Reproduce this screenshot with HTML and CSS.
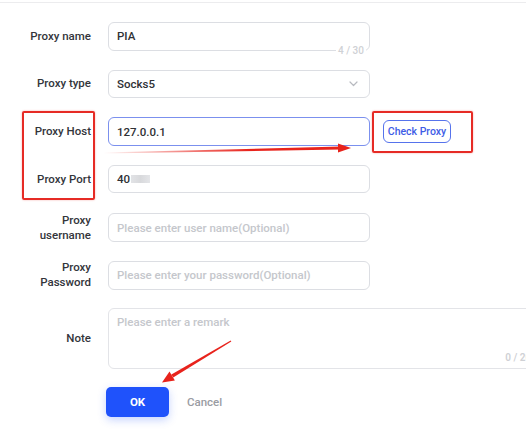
FILE: index.html
```html
<!DOCTYPE html>
<html>
<head>
<meta charset="utf-8">
<link rel="stylesheet" href="styles.css">
</head>
<body>
<div class="topline"></div>
<form class="form">
  <div class="row">
    <label class="label">Proxy name</label>
    <div class="input">
      <span class="value">PIA</span>
      <span class="count">4 / 30</span>
    </div>
  </div>
  <div class="row">
    <label class="label">Proxy type</label>
    <div class="input select">
      <span class="value">Socks5</span>
      <svg class="chev" width="9" height="6" viewBox="0 0 9 6"><path d="M1 1l3.5 3.5L8 1" fill="none" stroke="#b8bac0" stroke-width="1.2" stroke-linecap="round" stroke-linejoin="round"/></svg>
    </div>
  </div>
  <div class="row">
    <label class="label">Proxy Host</label>
    <div class="input focus"><span class="value">127.0.0.1</span></div>
    <button type="button" class="check">Check Proxy</button>
  </div>
  <div class="row">
    <label class="label">Proxy Port</label>
    <div class="input"><span class="value">40</span><span class="blur"></span></div>
  </div>
  <div class="row">
    <label class="label">Proxy<br>username</label>
    <div class="input"><span class="ph">Please enter user name(Optional)</span></div>
  </div>
  <div class="row">
    <label class="label">Proxy<br>Password</label>
    <div class="input"><span class="ph">Please enter your password(Optional)</span></div>
  </div>
  <div class="row tall">
    <label class="label">Note</label>
    <div class="textarea">
      <span class="ph">Please enter a remark</span>
      <span class="tcount">0 / 200</span>
    </div>
  </div>
  <div class="actions">
    <button type="button" class="ok">OK</button>
    <button type="button" class="cancel">Cancel</button>
  </div>
</form>

<div class="mark mark-labels"></div>
<div class="mark mark-check"></div>
<svg class="arrows" width="526" height="440" viewBox="0 0 526 440">
  <defs>
    <linearGradient id="fade1" x1="103" y1="0" x2="250" y2="0" gradientUnits="userSpaceOnUse">
      <stop offset="0" stop-color="#e8231c" stop-opacity="0"/>
      <stop offset="1" stop-color="#e8231c" stop-opacity="1"/>
    </linearGradient>
  </defs>
  <polygon points="103,152.6 341,146.6 341,149.6 103,153.4" fill="url(#fade1)"/>
  <polygon points="338,143.6 351,148.1 338,152.6" fill="#e8231c"/>
  <polygon points="231.3,341.4 230.7,340.6 171.4,374.4 173.2,377.4" fill="#e8231c"/>
  <polygon points="174.9,380.6 169.5,371.4 162,382.5" fill="#e8231c"/>
</svg>
</body>
</html>
```

FILE: styles.css
```css
* { box-sizing: border-box; }
html, body {
  margin: 0;
  padding: 0;
  background: #fff;
  overflow: hidden;
  width: 526px;
  height: 440px;
}
body {
  font-family: Roboto, "Noto Sans", sans-serif;
  color: #303133;
  position: relative;
}
.topline {
  height: 1px;
  margin-top: 2px;
  background: #ececee;
}
.form {
  display: flex;
  flex-direction: column;
  gap: 19.67px;
  padding-top: 19px;
  margin: 0;
}
.row {
  display: grid;
  grid-template-columns: 91px 262px auto;
  column-gap: 17px;
  align-items: center;
  height: 28px;
}
.row.tall {
  height: 61px;
  grid-template-columns: 91px 440px;
}
.label {
  text-align: right;
  font-size: 11.5px;
  line-height: 15px;
  font-weight: 500;
  color: #33353b;
}
.input {
  position: relative;
  height: 28.5px;
  border: 1px solid #dcdee3;
  border-radius: 6px;
  display: flex;
  align-items: center;
  padding: 0 8px;
  font-size: 11.5px;
  font-weight: 500;
}
.input.focus { border-color: #7b90ee; }
.value { color: #2f3135; }
.ph {
  color: #c5c7cc;
  font-size: 11.5px;
  font-weight: 500;
}
.count {
  position: absolute;
  right: 3px;
  bottom: -7px;
  background: #fff;
  padding: 0 2px;
  font-size: 10px;
  color: #cfd1d5;
  line-height: 12px;
}
.select { justify-content: space-between; }
.chev { margin-right: 3px; }
.blur {
  display: inline-block;
  width: 19px;
  height: 8px;
  margin-left: 1px;
  background: linear-gradient(90deg, #e2e3e6, #d8d9dc 50%, #e4e5e8);
  filter: blur(0.4px);
}
.check {
  justify-self: start;
  margin-left: -4px;
  height: 23px;
  width: 68px;
  padding: 0;
  border: 1px solid #5673ec;
  border-radius: 6px;
  background: #fff;
  color: #3e5ce6;
  font-family: inherit;
  font-size: 10.5px;
  font-weight: 500;
}
.textarea {
  position: relative;
  height: 61px;
  border: 1px solid #e3e4e8;
  border-radius: 6px;
  padding: 5px 8px;
  line-height: 14px;
  align-self: stretch;
}
.tcount {
  position: absolute;
  right: 10px;
  bottom: 3px;
  font-size: 10px;
  font-weight: 600;
  color: #cfd1d5;
}
.actions {
  display: flex;
  align-items: center;
  padding-left: 106px;
  margin-top: -1.5px;
}
.ok {
  width: 63px;
  height: 30px;
  border: none;
  border-radius: 5px;
  background: #1f52fb;
  color: #fff;
  font-family: inherit;
  font-size: 11.5px;
  font-weight: 700;
  box-shadow: 0 3px 8px rgba(31, 82, 251, 0.25);
}
.cancel {
  margin-left: 14px;
  border: none;
  background: none;
  color: #9a9ca3;
  font-family: inherit;
  font-size: 11.5px;
  font-weight: 500;
  padding: 0 4px;
}
.mark {
  position: absolute;
  border: 2px solid #e62b25;
  border-radius: 2px;
  box-shadow: 0 0 2px rgba(230, 43, 37, 0.4);
}
.mark-labels {
  left: 22px;
  top: 111px;
  width: 73px;
  height: 89px;
}
.mark-check {
  left: 372px;
  top: 111px;
  width: 101px;
  height: 42px;
}
.arrows {
  position: absolute;
  left: 0;
  top: 0;
  pointer-events: none;
}
```
